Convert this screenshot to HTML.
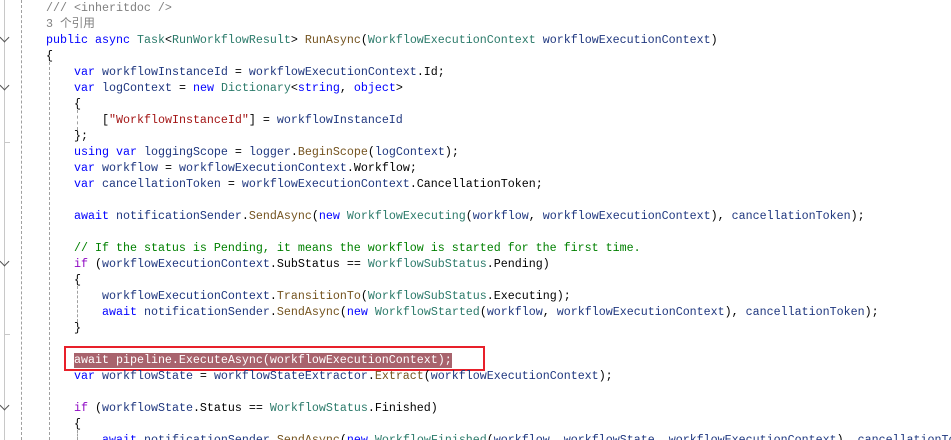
<!DOCTYPE html>
<html><head><meta charset="utf-8"><style>
html,body{margin:0;padding:0;background:#fff;width:951px;height:440px;overflow:hidden;position:relative}
.l{position:absolute;left:0;height:16px;line-height:16px;white-space:pre;font-family:"Liberation Mono","Noto Sans CJK SC",monospace;font-size:11.67px;color:#000}
.k{color:#0000ff}.c{color:#8f08c4}.t{color:#2b7a6a}.m{color:#74531f}.v{color:#1f377f}.s{color:#a31515}.g{color:#808080}.cm{color:#008000}
.vl{position:absolute;width:0;border-left:1px dashed #a0a0a0}
.chev{position:absolute;left:1px;width:6px;height:6px;border-right:1.3px solid #555;border-bottom:1.3px solid #555;transform:rotate(45deg)}
</style></head><body>
<div style="position:absolute;left:4px;top:0;height:440px;border-left:1px solid #c8c8c8"></div>
<div class="vl" style="left:21px;top:0;height:440px"></div>
<div class="vl" style="left:49px;top:62px;height:378px"></div>
<div class="vl" style="left:77px;top:110px;height:20px"></div>
<div class="vl" style="left:77px;top:286px;height:36px"></div>
<div class="vl" style="left:77px;top:430px;height:10px"></div>
<div style="position:absolute;left:4px;top:142px;width:6px;border-top:1px solid #c8c8c8"></div>
<div style="position:absolute;left:4px;top:334px;width:6px;border-top:1px solid #c8c8c8"></div>
<div class="chev" style="top:34px"></div>
<div class="chev" style="top:82px"></div>
<div class="chev" style="top:258px"></div>
<div class="chev" style="top:402px"></div>

<div class="l g" style="top:0;left:46px">/// &lt;inheritdoc /&gt;</div>
<div class="l g" style="top:16px;left:46px">3 个引用</div>
<div class="l" style="top:32px;left:46px"><span class="k">public</span> <span class="k">async</span> <span class="t">Task</span>&lt;<span class="t">RunWorkflowResult</span>&gt; <span class="m">RunAsync</span>(<span class="t">WorkflowExecutionContext</span> <span class="v">workflowExecutionContext</span>)</div>
<div class="l" style="top:48px;left:46px">{</div>
<div class="l" style="top:64px;left:74px"><span class="k">var</span> <span class="v">workflowInstanceId</span> = <span class="v">workflowExecutionContext</span>.Id;</div>
<div class="l" style="top:80px;left:74px"><span class="k">var</span> <span class="v">logContext</span> = <span class="k">new</span> <span class="t">Dictionary</span>&lt;<span class="k">string</span>, <span class="k">object</span>&gt;</div>
<div class="l" style="top:96px;left:74px">{</div>
<div class="l" style="top:112px;left:102px">[<span class="s">"WorkflowInstanceId"</span>] = <span class="v">workflowInstanceId</span></div>
<div class="l" style="top:128px;left:74px">};</div>
<div class="l" style="top:144px;left:74px"><span class="k">using</span> <span class="k">var</span> <span class="v">loggingScope</span> = <span class="v">logger</span>.<span class="m">BeginScope</span>(<span class="v">logContext</span>);</div>
<div class="l" style="top:160px;left:74px"><span class="k">var</span> <span class="v">workflow</span> = <span class="v">workflowExecutionContext</span>.Workflow;</div>
<div class="l" style="top:176px;left:74px"><span class="k">var</span> <span class="v">cancellationToken</span> = <span class="v">workflowExecutionContext</span>.CancellationToken;</div>
<div class="l" style="top:208px;left:74px"><span class="k">await</span> <span class="v">notificationSender</span>.<span class="m">SendAsync</span>(<span class="k">new</span> <span class="t">WorkflowExecuting</span>(<span class="v">workflow</span>, <span class="v">workflowExecutionContext</span>), <span class="v">cancellationToken</span>);</div>
<div class="l cm" style="top:240px;left:74px">// If the status is Pending, it means the workflow is started for the first time.</div>
<div class="l" style="top:256px;left:74px"><span class="c">if</span> (<span class="v">workflowExecutionContext</span>.SubStatus == <span class="t">WorkflowSubStatus</span>.Pending)</div>
<div class="l" style="top:272px;left:74px">{</div>
<div class="l" style="top:288px;left:102px"><span class="v">workflowExecutionContext</span>.<span class="m">TransitionTo</span>(<span class="t">WorkflowSubStatus</span>.Executing);</div>
<div class="l" style="top:304px;left:102px"><span class="k">await</span> <span class="v">notificationSender</span>.<span class="m">SendAsync</span>(<span class="k">new</span> <span class="t">WorkflowStarted</span>(<span class="v">workflow</span>, <span class="v">workflowExecutionContext</span>), <span class="v">cancellationToken</span>);</div>
<div class="l" style="top:320px;left:74px">}</div>
<div class="l" style="top:352px;left:74px;background:#a8636d;color:#fff;height:15px;line-height:15px;top:353px">await pipeline.ExecuteAsync(workflowExecutionContext);</div>
<div style="position:absolute;left:64px;top:346px;width:417px;height:21px;border:2px solid #e8202a"></div>
<div class="l" style="top:368px;left:74px"><span class="k">var</span> <span class="v">workflowState</span> = <span class="v">workflowStateExtractor</span>.<span class="m">Extract</span>(<span class="v">workflowExecutionContext</span>);</div>
<div class="l" style="top:400px;left:74px"><span class="c">if</span> (<span class="v">workflowState</span>.Status == <span class="t">WorkflowStatus</span>.Finished)</div>
<div class="l" style="top:416px;left:74px">{</div>
<div class="l" style="top:432px;left:102px"><span class="k">await</span> <span class="v">notificationSender</span>.<span class="m">SendAsync</span>(<span class="k">new</span> <span class="t">WorkflowFinished</span>(<span class="v">workflow</span>, <span class="v">workflowState</span>, <span class="v">workflowExecutionContext</span>), <span class="v">cancellationToken</span>);</div>
</body></html>
